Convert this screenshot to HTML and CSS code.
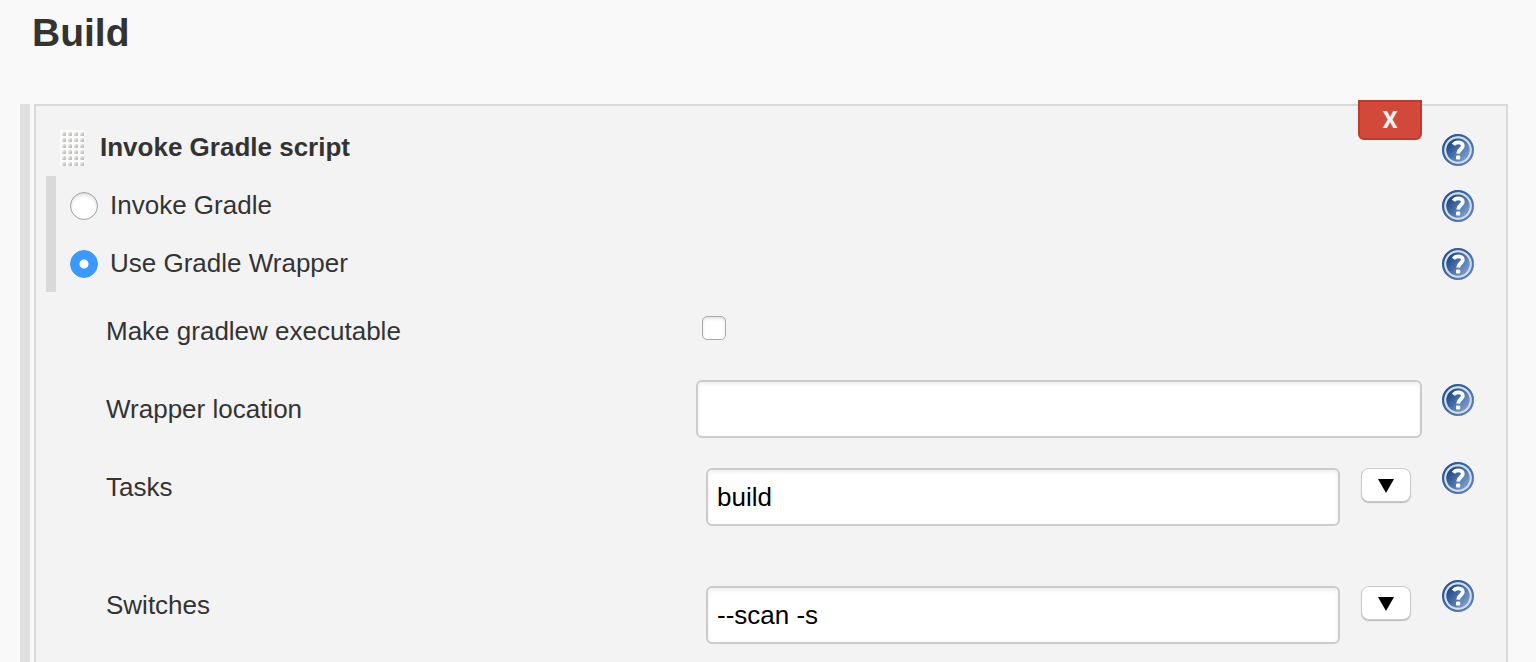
FILE: index.html
```html
<!DOCTYPE html>
<html lang="en">
<head>
<meta charset="utf-8">
<title>Build</title>
<link rel="stylesheet" href="styles.css">
</head>
<body>
<svg class="defs" aria-hidden="true">
  <defs>
    <linearGradient id="ring" x1="0" y1="0" x2="1" y2="1">
      <stop offset="0" stop-color="#214f91"/><stop offset="1" stop-color="#6688ba"/>
    </linearGradient>
    <linearGradient id="disc" x1="0" y1="0.1" x2="1" y2="0.9">
      <stop offset="0.1" stop-color="#1d4788"/><stop offset="1" stop-color="#86a8d3"/>
    </linearGradient>
    <linearGradient id="dot" x1="0" y1="0" x2="1" y2="1">
      <stop offset="0.1" stop-color="#f4f4f2"/><stop offset="1" stop-color="#a9a9a6"/>
    </linearGradient>
    <pattern id="dots" x="2" y="2" width="6" height="6" patternUnits="userSpaceOnUse">
      <rect width="4" height="4" rx="1" fill="url(#dot)"/>
    </pattern>
    <symbol id="help" viewBox="0 0 32 32">
      <circle cx="16" cy="16" r="16" fill="#a9bcd8"/>
      <circle cx="16" cy="16" r="14.8" fill="none" stroke="url(#ring)" stroke-width="2.4"/>
      <circle cx="16" cy="16" r="12.7" fill="none" stroke="#d3deed" stroke-width="2"/>
      <circle cx="16" cy="16" r="11.6" fill="url(#disc)"/>
      <path d="M11.4 10.8C12.6 9 14.4 8.2 16.6 8.3C19.4 8.4 20.9 10 20.8 12.1C20.7 14.9 16.4 15.2 16.1 19.6" fill="none" stroke="#fff" stroke-width="3.8"/>
      <rect x="14" y="21.4" width="4.2" height="4.2" rx="1" fill="#fff"/>
    </symbol>
    <symbol id="arrow" viewBox="0 0 16 14"><path d="M0 0H16L8 14Z"/></symbol>
  </defs>
</svg>
<main class="page">
  <h1 class="title">Build</h1>
  <div class="steps">
    <div class="rail"></div>
    <section class="panel">
      <button class="delete" type="button">X</button>
      <div class="header">
        <svg class="grip" viewBox="0 0 24 36" aria-hidden="true"><rect width="24" height="36" fill="#fbfbfb"/><rect x="2" y="2" width="22" height="34" fill="url(#dots)"/></svg>
        <h2 class="heading">Invoke Gradle script</h2>
        <button class="help" type="button" aria-label="Help: Invoke Gradle script"><svg><use href="#help"/></svg></button>
      </div>
      <div class="choices">
        <div class="choice">
          <label class="option"><input class="radio" type="radio" name="mode"><span class="caption">Invoke Gradle</span></label>
          <button class="help" type="button" aria-label="Help: Invoke Gradle"><svg><use href="#help"/></svg></button>
        </div>
        <div class="choice">
          <label class="option"><input class="radio" type="radio" name="mode" checked><span class="caption">Use Gradle Wrapper</span></label>
          <button class="help" type="button" aria-label="Help: Use Gradle Wrapper"><svg><use href="#help"/></svg></button>
        </div>
      </div>
      <div class="row">
        <label class="label" for="executable">Make gradlew executable</label>
        <div class="check"><input class="checkbox" type="checkbox" id="executable"></div>
      </div>
      <div class="row">
        <label class="label" for="location">Wrapper location</label>
        <div class="control"><input class="text" type="text" id="location"></div>
        <button class="help" type="button" aria-label="Help: Wrapper location"><svg><use href="#help"/></svg></button>
      </div>
      <div class="row row-tall">
        <label class="label" for="tasks">Tasks</label>
        <div class="control expandable"><input class="text" type="text" id="tasks" value="build"><button class="expand" type="button" aria-label="Expand Tasks"><svg><use href="#arrow"/></svg></button></div>
        <button class="help" type="button" aria-label="Help: Tasks"><svg><use href="#help"/></svg></button>
      </div>
      <div class="row">
        <label class="label" for="switches">Switches</label>
        <div class="control expandable"><input class="text" type="text" id="switches" value="--scan -s"><button class="expand" type="button" aria-label="Expand Switches"><svg><use href="#arrow"/></svg></button></div>
        <button class="help" type="button" aria-label="Help: Switches"><svg><use href="#help"/></svg></button>
      </div>
    </section>
  </div>
</main>
</body>
</html>
```
FILE: styles.css
```css
* { box-sizing: border-box; }

body {
  margin: 0;
  background: #f9f9f9;
  color: #333;
  font: 26px/30px "Liberation Sans", Arial, sans-serif;
}

input, button { margin: 0; font: inherit; }

.defs { position: absolute; width: 0; height: 0; }

.page {
  display: flex;
  flex-direction: column;
  min-height: 100vh;
  padding: 0 28px 0 20px;
}

.title {
  margin: 0;
  padding: 9px 12px 47px;
  font-size: 39px;
  line-height: 48px;
}

.steps { display: flex; flex: 1; gap: 4px; }

.rail { width: 10px; background: #e0e0e0; }

.panel {
  position: relative;
  flex: 1;
  min-width: 0;
  padding-bottom: 8px;
  border: 2px solid #d9d9d9;
  border-bottom: 0;
  background: #f3f3f3;
}

.delete {
  position: absolute;
  top: -6px;
  right: 84px;
  width: 64px;
  height: 40px;
  padding: 0;
  border: 2px solid #bf3a2c;
  border-radius: 0 0 6px 6px;
  background: #d24939;
  color: #f2f2f2;
  font: bold 24px/34px Roboto, sans-serif;
}

.header {
  display: flex;
  align-items: flex-start;
  height: 70px;
  padding: 24px 32px 0 24px;
}

.grip { width: 24px; height: 36px; cursor: move; }

.heading {
  flex: 1;
  margin: 0;
  padding-left: 16px;
  font-size: 26px;
  line-height: 34px;
}

.help {
  width: 32px;
  height: 32px;
  padding: 0;
  border: 0;
  background: none;
}

.help svg { display: block; width: 32px; height: 32px; }

.header .help { margin-top: 4px; }

.choices {
  margin-left: 10px;
  border-left: 10px solid #d9d9d9;
}

.choice {
  display: flex;
  align-items: center;
  justify-content: space-between;
  height: 58px;
  padding: 2px 32px 0 14px;
}

.option { display: flex; align-items: center; gap: 12px; }

.caption { padding-bottom: 2px; }

.radio, .checkbox { appearance: none; background: #fff; }

.radio {
  width: 28px;
  height: 28px;
  border: 1px solid #a0a0a0;
  border-radius: 50%;
  box-shadow: inset 0 2px 3px #ddd;
}

.radio:checked {
  border-color: #3b99fc;
  background: radial-gradient(circle, #fff 4px, #3b99fc 5px);
  box-shadow: none;
}

.row {
  display: grid;
  grid-template-columns: minmax(0, 590fr) minmax(0, 746fr) 32px;
  align-items: start;
  min-height: 78px;
  padding: 0 32px 0 70px;
}

.row-tall { min-height: 118px; }

.label { line-height: 78px; }

.check { padding: 24px 6px 0; }

.checkbox {
  display: block;
  width: 24px;
  height: 24px;
  border: 1px solid #aaa;
  border-radius: 5px;
  box-shadow: inset 0 2px 3px #e2e2e2;
}

.control { display: flex; padding: 10px 20px 0 0; }

.expandable { align-items: flex-start; gap: 21px; padding: 20px 31px 0 10px; }

.text {
  flex: 1;
  min-width: 0;
  height: 58px;
  padding: 0 9px;
  border: 2px solid #ccc;
  border-radius: 6px;
  background: #fff;
  box-shadow: inset 0 2px 4px #eee;
  color: #000;
}

.expand {
  display: grid;
  place-items: center;
  width: 50px;
  height: 34px;
  padding: 2px 0 0;
  border: 1px solid #ccc;
  border-radius: 8px;
  background: #fff;
  box-shadow: 0 1px 1px #bbb;
}

.expand svg { width: 16px; height: 14px; }

.row .help { margin-top: 14px; }
```
